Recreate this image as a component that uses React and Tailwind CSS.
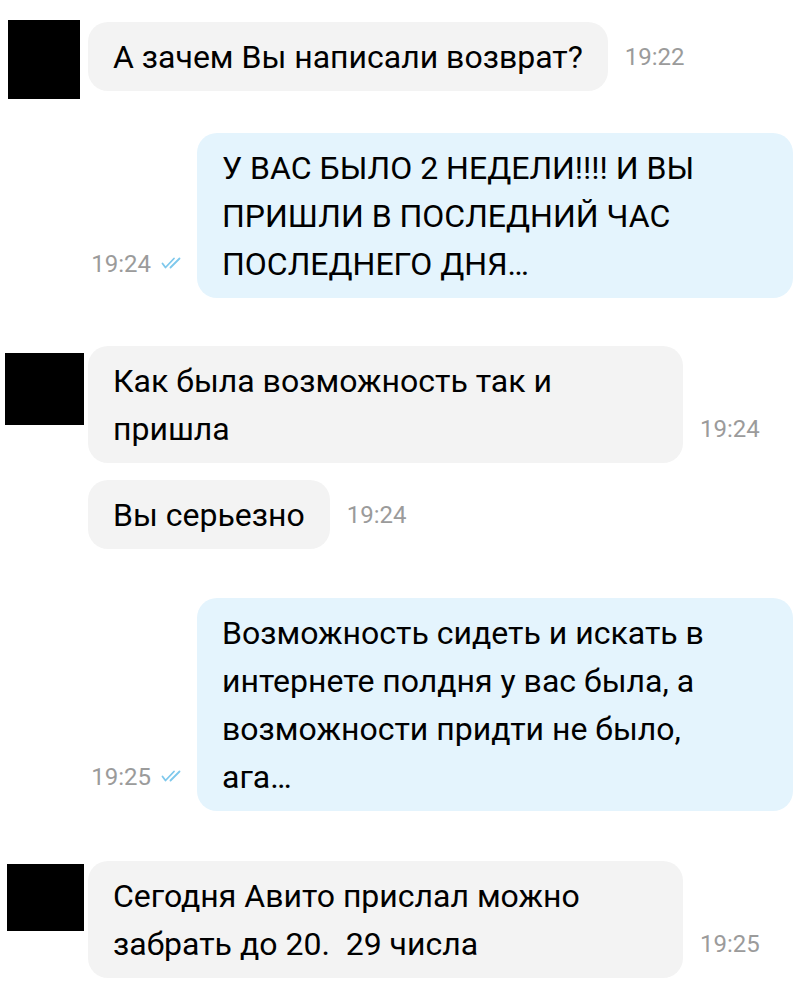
const messages = [
  { id: 1, out: false, time: "19:22", mt: "mt-[22px]", box: "left-[8px] top-[-2px] h-[79px] w-[72px]", text: "А зачем Вы написали возврат?" },
  { id: 2, out: true, time: "19:24", mt: "mt-[42px]", text: "У ВАС БЫЛО 2 НЕДЕЛИ!!!! И ВЫ ПРИШЛИ В ПОСЛЕДНИЙ ЧАС ПОСЛЕДНЕГО ДНЯ…" },
  { id: 3, out: false, time: "19:24", mt: "mt-[48px]", box: "left-[5px] top-[7px] h-[72px] w-[79px]", text: "Как была возможность так и пришла" },
  { id: 4, out: false, time: "19:24", mt: "mt-[17px]", box: null, text: "Вы серьезно" },
  { id: 5, out: true, time: "19:25", mt: "mt-[49px]", text: "Возможность сидеть и искать в интернете полдня у вас была, а возможности придти не было,\nага…" },
  { id: 6, out: false, time: "19:25", mt: "mt-[50px]", box: "left-[7px] top-[3px] h-[67px] w-[77px]", text: "Сегодня Авито прислал можно забрать до 20.  29 числа" },
];

function DoubleCheck() {
  return (
    <svg width="23" height="12" viewBox="0 0 23 12" fill="none" className="ml-[10px] mb-[2px]">
      <path d="M1.5 6.5 L4.5 10.5 L13 1.5" stroke="#7ec8ec" strokeWidth="1.8" strokeLinecap="round" strokeLinejoin="round" />
      <path d="M9.5 10.5 L18.5 1.5" stroke="#7ec8ec" strokeWidth="1.8" strokeLinecap="round" strokeLinejoin="round" />
    </svg>
  );
}

function Time({ value, read }) {
  return (
    <div className="flex shrink-0 items-center pb-[10px] text-[24px] leading-[48px] text-[#9b9b9b]">
      <span>{value}</span>
      {read ? <DoubleCheck /> : null}
    </div>
  );
}

function Bubble({ text, out }) {
  return (
    <div
      className={
        out
          ? "max-w-[596px] whitespace-pre-wrap rounded-[20px] bg-[#e4f4fd] px-[25px] pt-[11px] pb-[10px] text-[32px] leading-[48px] text-black"
          : "max-w-[595px] whitespace-pre-wrap rounded-[20px] bg-[#f3f3f3] px-[25px] pt-[11px] pb-[10px] text-[32px] leading-[48px] text-black"
      }
    >
      {text}
    </div>
  );
}

export default function App() {
  return (
    <main className="min-h-screen overflow-hidden bg-white font-['Roboto','Liberation_Sans',sans-serif]">
      {messages.map((m) =>
        m.out ? (
          <div key={m.id} className={`${m.mt} flex items-end justify-end gap-[13px] pr-[17px]`}>
            <Time value={m.time} read />
            <Bubble text={m.text} out />
          </div>
        ) : (
          <div key={m.id} className={`${m.mt} relative flex items-end gap-[17px] pl-[88px]`}>
            {m.box ? <div className={`absolute bg-black ${m.box}`} /> : null}
            <Bubble text={m.text} />
            <Time value={m.time} />
          </div>
        )
      )}
    </main>
  );
}
